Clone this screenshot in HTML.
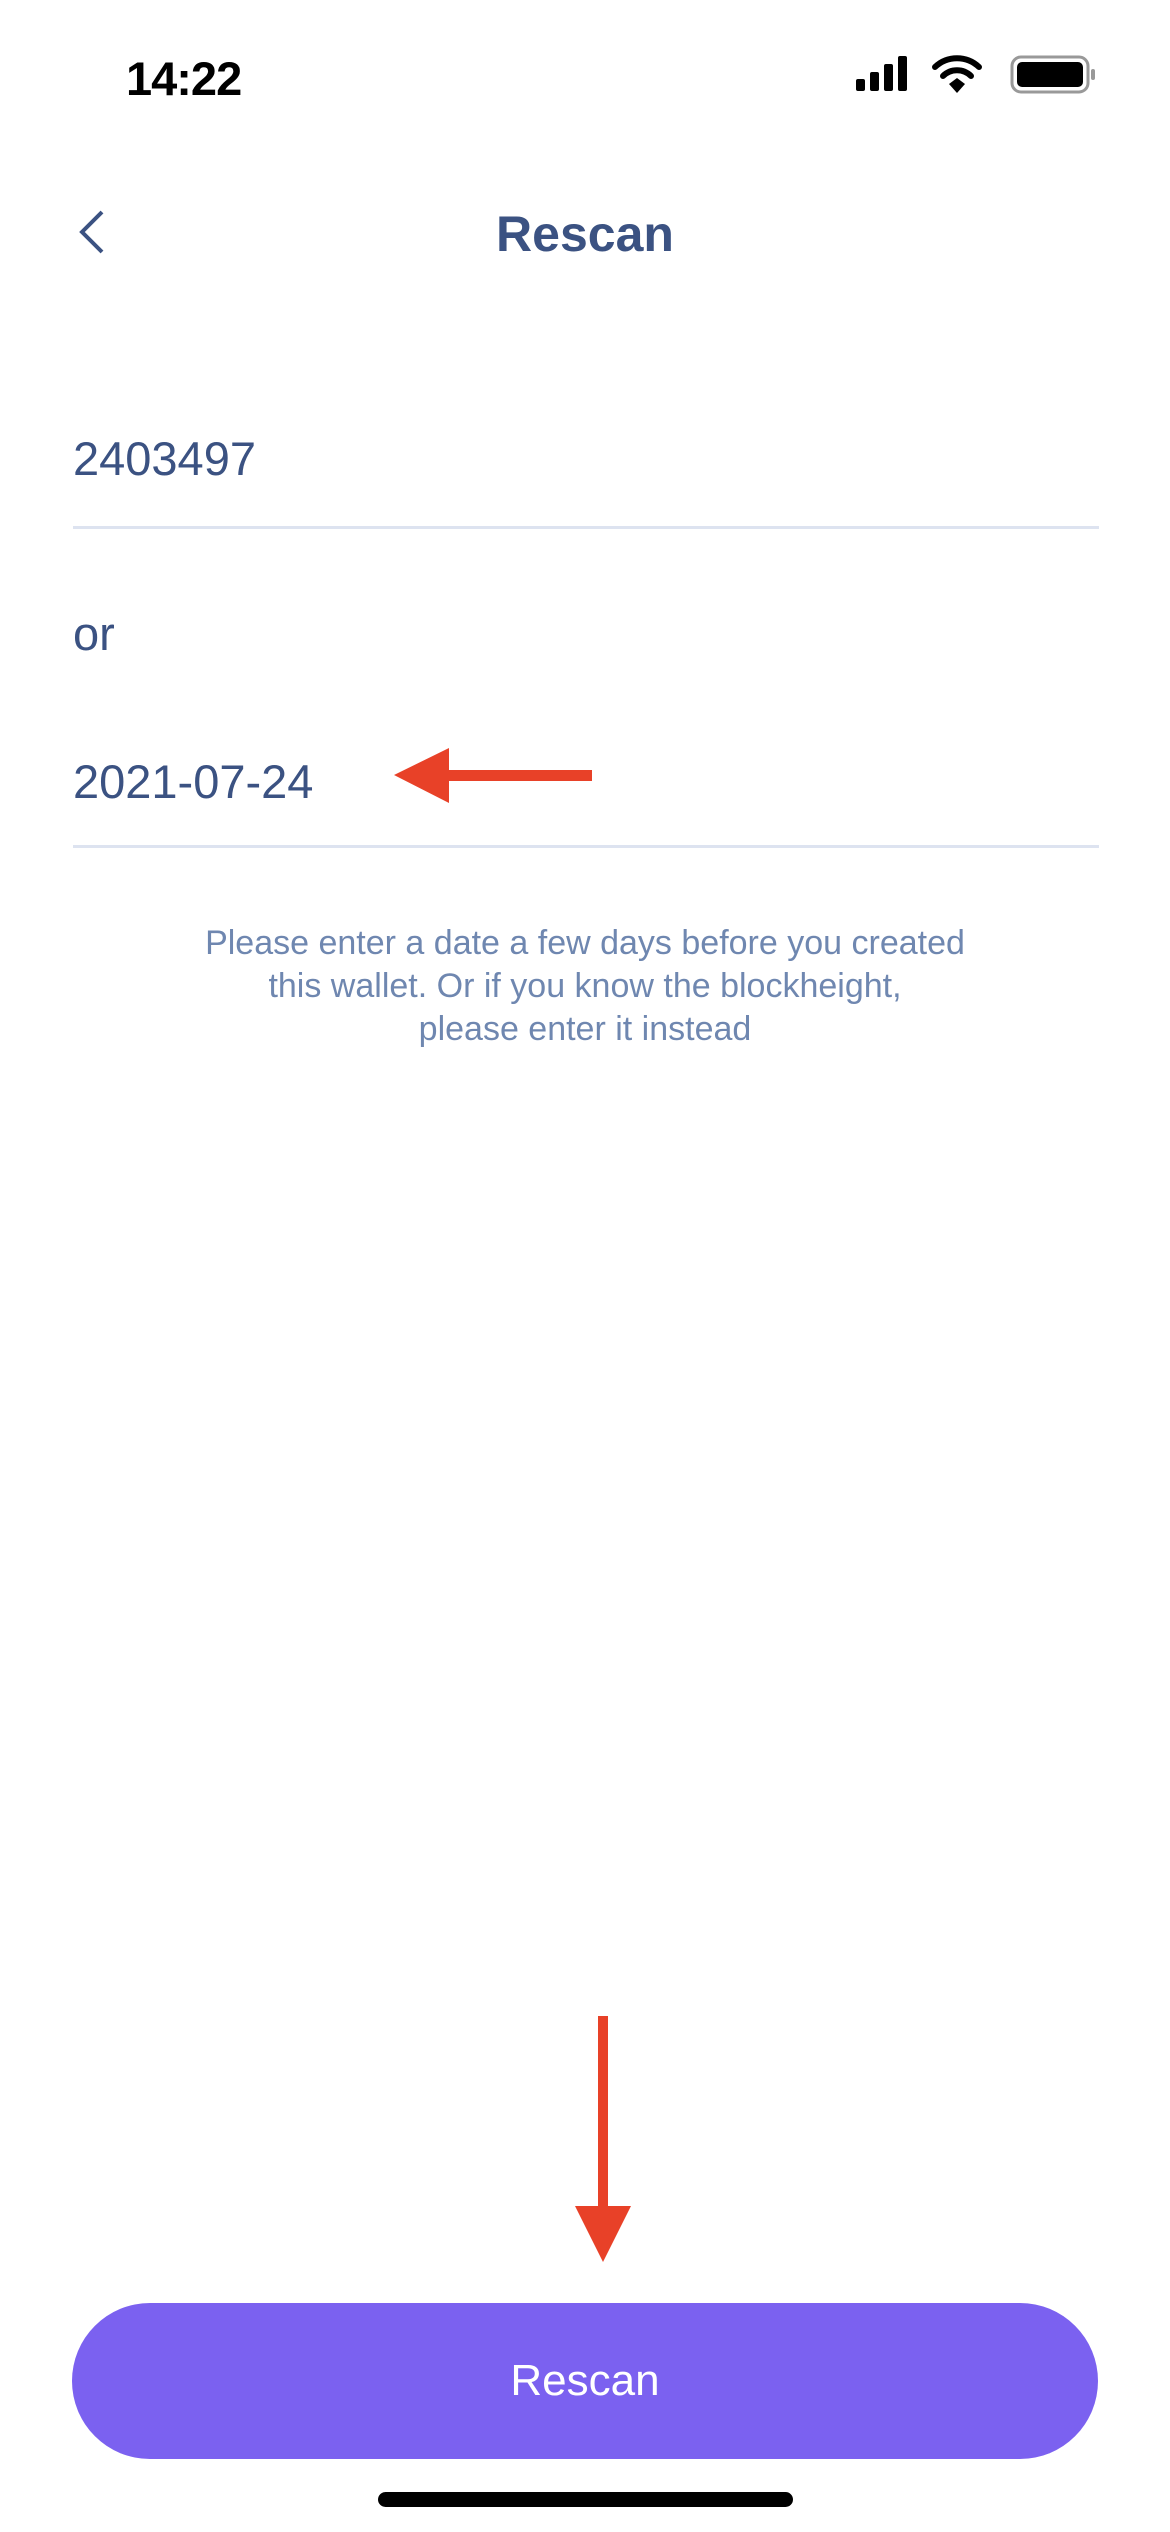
<!DOCTYPE html>
<html><head><meta charset="utf-8"><style>
body{margin:0;width:1170px;height:2532px;background:#fff;position:relative;overflow:hidden;font-family:"Liberation Sans",sans-serif}
.a{position:absolute}
.t{color:#3b5282;font-size:47px;line-height:1}
</style></head><body>
<div class="a" style="left:126px;top:51px;font-size:47px;font-weight:bold;color:#000;letter-spacing:-1px">14:22</div>
<svg class="a" style="left:850px;top:53px" width="250" height="46" viewBox="0 0 250 46">
<rect x="6" y="26" width="9" height="12" rx="2"/><rect x="20" y="19" width="9" height="19" rx="2"/><rect x="34" y="11" width="9" height="27" rx="2"/><rect x="48" y="3" width="9" height="35" rx="2"/>
<path d="M85 14a32 32 0 0 1 44 0" stroke="#000" stroke-width="6" fill="none" stroke-linecap="round"/>
<path d="M93 23a20 20 0 0 1 28 0" stroke="#000" stroke-width="6" fill="none" stroke-linecap="round"/>
<path d="M99 31l8-6 8 6-8 9z" fill="#000"/>
<rect x="162" y="4" width="76" height="35" rx="9" fill="none" stroke="#999" stroke-width="3"/>
<rect x="167" y="9" width="66" height="25" rx="5"/>
<rect x="241" y="16" width="4" height="11" rx="2" fill="#999"/>
</svg>
<svg class="a" style="left:76px;top:208px" width="32" height="48"><path d="M26 4L6 24l20 20" stroke="#3b5282" stroke-width="4" fill="none"/></svg>
<div class="a" style="left:0;width:1170px;text-align:center;top:205px;font-size:50px;font-weight:bold;color:#3b5282">Rescan</div>
<div class="a t" style="left:73px;top:435px">2403497</div>
<div class="a" style="left:73px;top:526px;width:1026px;height:3px;background:#dde3f0"></div>
<div class="a t" style="left:73px;top:610px">or</div>
<div class="a t" style="left:73px;top:758px">2021-07-24</div>
<svg class="a" style="left:390px;top:745px" width="220" height="60"><path d="M4 30L59 3v22h143v11H59v22z" fill="#e84128"/></svg>
<div class="a" style="left:73px;top:845px;width:1026px;height:3px;background:#dde3f0"></div>
<div class="a" style="left:0;width:1170px;text-align:center;top:922px;font-size:34px;line-height:43px;color:#6f87b0">Please enter a date a few days before you created<br>this wallet. Or if you know the blockheight,<br>please enter it instead</div>
<svg class="a" style="left:570px;top:2014px" width="66" height="250"><path d="M28 2h10v190h23l-28 56-28-56h23z" fill="#e84128"/></svg>
<div class="a" style="left:72px;top:2303px;width:1026px;height:156px;border-radius:78px;background:#7b61f0;color:#fff;font-size:44px;text-align:center;line-height:156px">Rescan</div>
<div class="a" style="left:378px;top:2492px;width:415px;height:15px;border-radius:8px;background:#000"></div>
</body></html>
